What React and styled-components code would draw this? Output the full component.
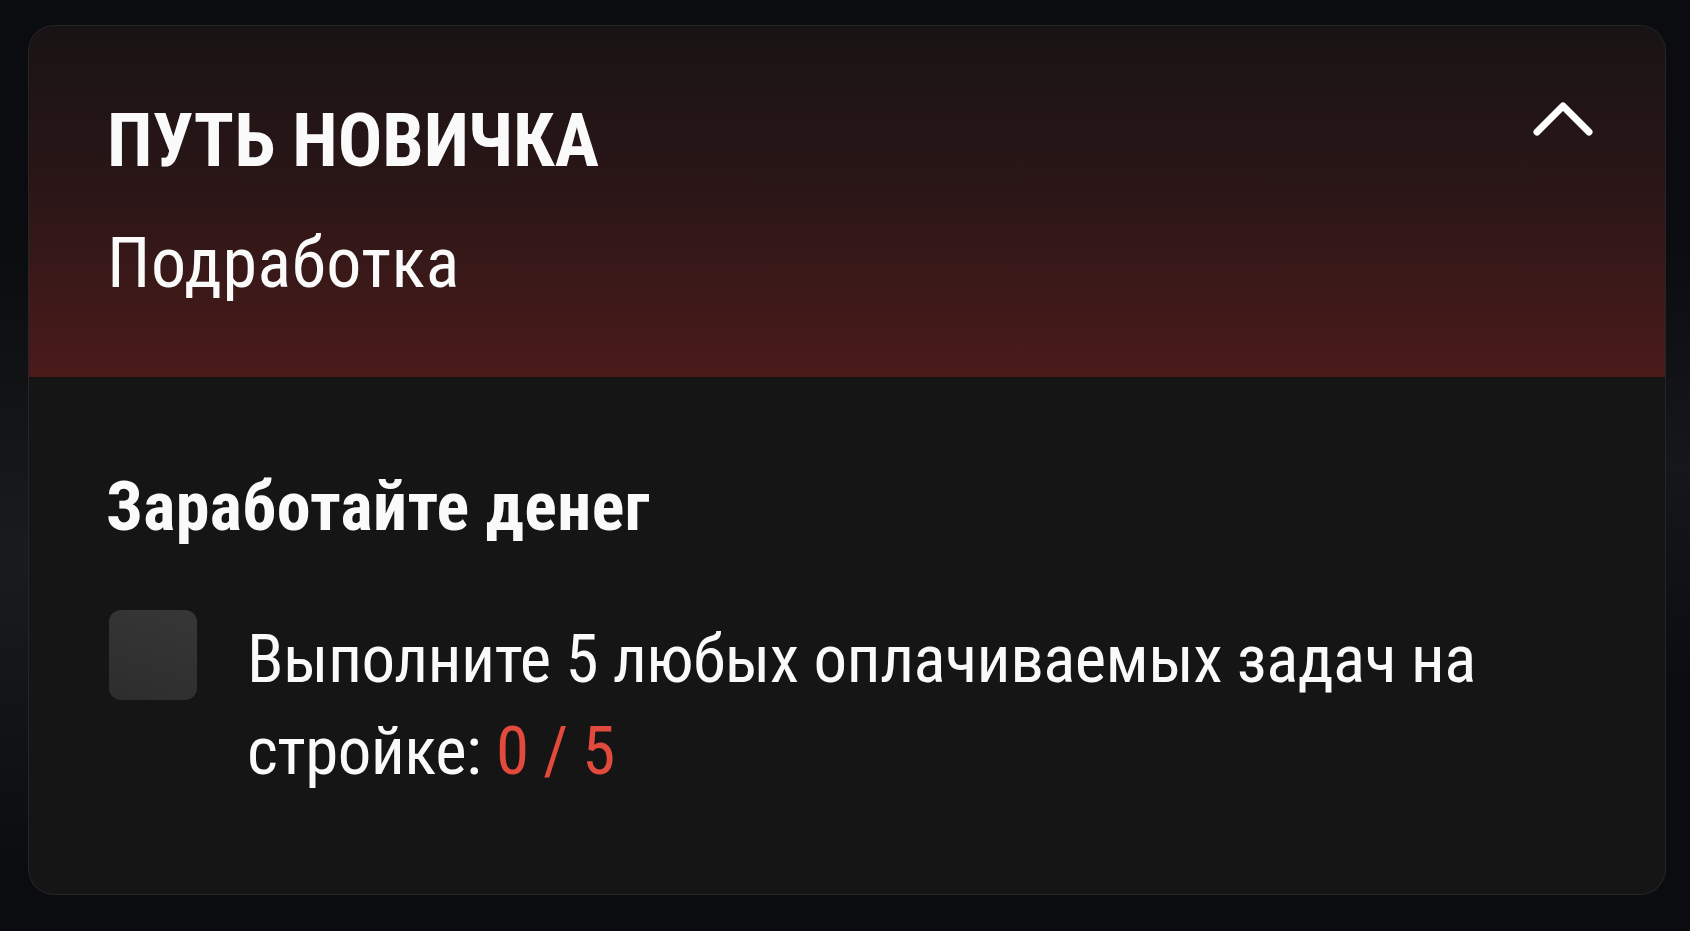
import React from 'react'
import styled, { createGlobalStyle } from 'styled-components'

const GlobalStyle = createGlobalStyle`
  html, body {
    margin: 0;
    padding: 0;
    background: #0c0d10;
    font-family: "Roboto Condensed", Roboto, "Liberation Sans", sans-serif;
    color: #fafafa;
  }
`

const Page = styled.div`
  width: 1690px;
  height: 931px;
  padding: 25px 24px 0 28px;
  box-sizing: border-box;
  background:
    radial-gradient(ellipse at 0% 60%, #1a1b1c 0%, transparent 40%),
    radial-gradient(ellipse at 100% 50%, #15171a 0%, transparent 35%),
    #0b0c0f;
  overflow: hidden;
`

const Card = styled.section`
  width: 1638px;
  border: 1px solid rgba(255, 255, 255, 0.07);
  border-radius: 26px;
  overflow: hidden;
  background: #151515;
  box-sizing: border-box;
`

const Header = styled.header`
  display: flex;
  justify-content: space-between;
  align-items: flex-start;
  padding: 71px 72px 70px 78px;
  background: linear-gradient(180deg, #191314 0%, #2a1617 45%, #4b1b1a 100%);
`

const Titles = styled.div`
  display: flex;
  flex-direction: column;
  gap: 34px;
`

const Title = styled.h1`
  margin: 0;
  font-size: 74px;
  line-height: 88px;
  font-weight: 700;
  text-transform: uppercase;
`

const Subtitle = styled.div`
  font-size: 70px;
  line-height: 88px;
  font-weight: 400;
  letter-spacing: 0.6px;
`

const Toggle = styled.button`
  display: flex;
  margin: 4px 0 0;
  padding: 0;
  border: none;
  background: none;
  cursor: pointer;
`

const Body = styled.div`
  padding: 86px 80px 97px 77px;
  display: flex;
  flex-direction: column;
  gap: 59px;
`

const SectionTitle = styled.h2`
  margin: 0;
  font-size: 68px;
  line-height: 88px;
  font-weight: 700;
  letter-spacing: 0.4px;
`

const Task = styled.div`
  display: flex;
  align-items: flex-start;
  gap: 50px;
`

const Check = styled.span`
  flex: none;
  width: 88px;
  height: 90px;
  margin-left: 3px;
  border-radius: 12px;
  background: linear-gradient(200deg, #373737 0%, #2d2d2d 100%);
`

const TaskText = styled.p`
  margin: 3px 0 0;
  font-size: 67px;
  line-height: 92px;
  font-weight: 400;
  letter-spacing: -0.6px;
`

const Count = styled.span`
  color: #e34a3e;
`

const Chevron = () => (
  <svg width="60" height="36" viewBox="0 0 60 36" fill="none">
    <path
      d="M4 31 L30 5 L56 31"
      stroke="#fff"
      strokeWidth="7"
      strokeLinecap="round"
      strokeLinejoin="round"
    />
  </svg>
)

const App = () => (
  <Page>
    <GlobalStyle />
    <Card>
      <Header>
        <Titles>
          <Title>Путь новичка</Title>
          <Subtitle>Подработка</Subtitle>
        </Titles>
        <Toggle aria-label="Свернуть">
          <Chevron />
        </Toggle>
      </Header>
      <Body>
        <SectionTitle>Заработайте денег</SectionTitle>
        <Task>
          <Check />
          <TaskText>
            Выполните 5 любых оплачиваемых задач на стройке: <Count>0 / 5</Count>
          </TaskText>
        </Task>
      </Body>
    </Card>
  </Page>
)

export default App
